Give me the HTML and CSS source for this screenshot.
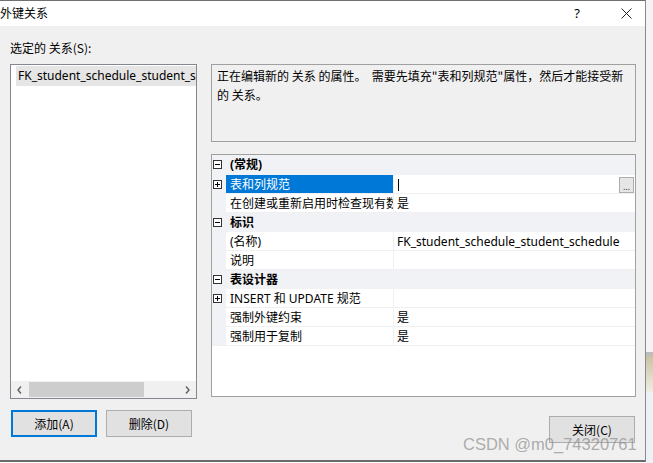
FILE: index.html
```html
<!DOCTYPE html>
<html>
<head>
<meta charset="utf-8">
<link rel="stylesheet" href="styles.css">
</head>
<body>
<div class="screen">
  <div class="dialog">
    <div class="titlebar">
      <span class="title">外键关系</span>
      <span class="help">?</span>
      <span class="closex"><svg width="11" height="11" viewBox="0 0 11 11"><path d="M0.5 0.5 L10.5 10.5 M10.5 0.5 L0.5 10.5" stroke="#222" stroke-width="1" fill="none"/></svg></span>
    </div>
    <div class="body">
      <div class="left">
        <div class="label">选定的 关系(S):</div>
        <div class="listbox">
          <div class="items">
            <div class="item sel">FK_student_schedule_student_schedule</div>
          </div>
          <div class="hscroll">
            <span class="arrow"><svg width="5" height="8" viewBox="0 0 5 8"><path d="M4 0.5 L1 4 L4 7.5" stroke="#606060" stroke-width="1.4" fill="none"/></svg></span>
            <div class="track"><div class="thumb"></div></div>
            <span class="arrow"><svg width="5" height="8" viewBox="0 0 5 8"><path d="M1 0.5 L4 4 L1 7.5" stroke="#606060" stroke-width="1.4" fill="none"/></svg></span>
          </div>
        </div>
        <div class="btnrow">
          <button class="btn default">添加(A)</button>
          <button class="btn">删除(D)</button>
        </div>
      </div>
      <div class="right">
        <div class="desc">正在编辑新的 关系 的属性。&nbsp; 需要先填充"表和列规范"属性，然后才能接受新<br>的 关系。</div>
        <div class="pgrid">
          <div class="row cat"><span class="gut"><span class="tog minus"></span></span><span class="name">(常规)</span></div>
          <div class="row"><span class="gut"><span class="tog plus"></span></span><span class="name sel">表和列规范</span><span class="val"><span class="caret"></span><span class="ellip">…</span></span></div>
          <div class="row"><span class="gut"></span><span class="name">在创建或重新启用时检查现有数据</span><span class="val">是</span></div>
          <div class="row cat"><span class="gut"><span class="tog minus"></span></span><span class="name">标识</span></div>
          <div class="row"><span class="gut"></span><span class="name">(名称)</span><span class="val">FK_student_schedule_student_schedule</span></div>
          <div class="row"><span class="gut"></span><span class="name">说明</span><span class="val"></span></div>
          <div class="row cat"><span class="gut"><span class="tog minus"></span></span><span class="name">表设计器</span></div>
          <div class="row"><span class="gut"><span class="tog plus"></span></span><span class="name">INSERT 和 UPDATE 规范</span><span class="val"></span></div>
          <div class="row"><span class="gut"></span><span class="name">强制外键约束</span><span class="val">是</span></div>
          <div class="row"><span class="gut"></span><span class="name">强制用于复制</span><span class="val">是</span></div>
        </div>
        <div class="closerow"><button class="btn">关闭(C)</button></div>
      </div>
    </div>
  </div>
  <div class="outside">
    <div class="o1"></div>
    <div class="o2"></div>
    <div class="o3"></div>
    <div class="o4"></div>
  </div>
  <div class="watermark">CSDN @m0_74320761</div>
</div>
</body>
</html>
```
FILE: styles.css
```css
html, body {
  margin: 0;
  padding: 0;
  background: #ffffff;
}
body {
  font-family: "Noto Sans", "Noto Sans CJK SC", sans-serif;
  font-size: 12px;
  color: #000;
}
.screen {
  position: relative;
  width: 653px;
  height: 463px;
  display: flex;
  overflow: hidden;
}
.dialog {
  width: 646px;
  height: 462px;
  box-sizing: border-box;
  border-top: 1px solid #707070;
  border-right: 1px solid #8a8a8a;
  border-bottom: 2px solid #6a6a6a;
  display: flex;
  flex-direction: column;
  background: #f0f0f0;
}
.titlebar {
  height: 25px;
  background: #fff;
  display: flex;
  align-items: center;
  flex: none;
}
.title {
  padding-left: 0;
  font-family: "Noto Sans CJK SC", sans-serif;
  font-size: 12px;
  flex: 1;
  margin-top: -3px;
}
.help {
  font-family: "Noto Sans", sans-serif;
  font-size: 13px;
  margin-right: 41px;
  margin-top: -1px;
}
.closex {
  display: flex;
  margin-right: 13px;
}
.body {
  flex: 1;
  display: flex;
  padding-left: 10px;
}
.left {
  width: 187px;
  display: flex;
  flex-direction: column;
  padding-top: 14px;
}
.label {
  height: 16px;
  line-height: 16px;
  font-family: "Noto Sans CJK SC", sans-serif;
  margin-bottom: 8px;
}
.listbox {
  height: 335px;
  box-sizing: border-box;
  border: 1px solid #828790;
  background: #fff;
  display: flex;
  flex-direction: column;
}
.items {
  flex: 1;
  padding: 1px 0 0 5px;
  overflow: hidden;
}
.item {
  height: 20px;
  line-height: 20px;
  padding-left: 2px;
  white-space: nowrap;
  overflow: hidden;
}
.item.sel {
  background: #e5e5e5;
}
.hscroll {
  height: 17px;
  display: flex;
  align-items: center;
  background: #f0f0f0;
}
.arrow {
  width: 17px;
  display: flex;
  justify-content: center;
  align-items: center;
}
.track {
  flex: 1;
  height: 100%;
  display: flex;
  align-items: center;
}
.thumb {
  width: 115px;
  height: 15px;
  background: #cdcdcd;
  margin-left: 1px;
}
.btnrow {
  display: flex;
  gap: 9px;
  margin-top: 11px;
  padding-left: 1px;
}
.btn {
  font-family: "Noto Sans CJK SC", sans-serif;
  font-size: 12px;
  background: #e1e1e1;
  border: 1px solid #adadad;
  height: 27px;
  width: 86px;
  padding: 0;
  color: #000;
  margin: 0;
}
.btn.default {
  border: 2px solid #0078d7;
}
.right {
  margin-left: 14px;
  width: 425px;
  display: flex;
  flex-direction: column;
  padding-top: 38px;
}
.desc {
  height: 78px;
  box-sizing: border-box;
  border: 1px solid #a0a0a0;
  padding: 1px 5px;
  line-height: 19px;
  font-family: "Noto Sans CJK SC", sans-serif;
  white-space: nowrap;
}
.pgrid {
  margin-top: 12px;
  height: 243px;
  box-sizing: border-box;
  border: 1px solid #a0a0a0;
  padding-top: 1px;
  background: #fff;
  display: flex;
  flex-direction: column;
}
.row {
  height: 19px;
  box-sizing: border-box;
  display: flex;
  border-bottom: 1px solid #f0f0f0;
  line-height: 18px;
}
.row.cat {
  background: #f0f2f6;
  font-weight: bold;
  border-bottom-color: #f0f2f6;
}
.row:first-child {
  margin-top: -1px;
  height: 20px;
}
.gut {
  width: 14px;
  flex: none;
  background: #f0f2f6;
  display: flex;
  align-items: center;
}
.tog {
  width: 9px;
  height: 9px;
  box-sizing: border-box;
  border: 1px solid #333;
  margin-left: 1px;
  position: relative;
  background: #fff;
}
.tog::before {
  content: "";
  position: absolute;
  left: 1px;
  right: 1px;
  top: 3px;
  height: 1px;
  background: #000;
}
.tog.plus::after {
  content: "";
  position: absolute;
  top: 1px;
  bottom: 1px;
  left: 3px;
  width: 1px;
  background: #000;
}
.name {
  width: 167px;
  flex: none;
  padding: 1px 0 0 4px;
  box-sizing: border-box;
  white-space: nowrap;
  overflow: hidden;
}
.row.cat .name {
  width: auto;
}
.name.sel {
  background: #0078d7;
  color: #fff;
}
.val {
  flex: 1;
  border-left: 1px solid #f0f0f0;
  padding: 1px 0 0 3px;
  display: flex;
  align-items: center;
  white-space: nowrap;
  overflow: hidden;
}
.caret {
  width: 1px;
  height: 12px;
  background: #000;
  margin-left: 1px;
}
.ellip {
  margin-left: auto;
  margin-right: 1px;
  width: 15px;
  height: 16px;
  box-sizing: border-box;
  border: 1px solid #adadad;
  background: #e6e6e6;
  font-size: 9px;
  line-height: 18px;
  text-align: center;
  color: #333;
}
.closerow {
  display: flex;
  justify-content: flex-end;
  margin-top: 19px;
}
.closerow .btn {
  width: 86px;
  margin-right: 1px;
}
.outside {
  flex: 1;
  display: flex;
  flex-direction: column;
}
.o1 { height: 352px; background: #f4f4f4; }
.o2 { height: 4px; background: #bdbdbd; }
.o3 { height: 36px; background: linear-gradient(#c9c3a2, #efeee4); }
.o4 { flex: 1; background: #eef2f7; }
.watermark {
  position: absolute;
  left: 463px;
  top: 435px;
  font-family: "Liberation Sans", sans-serif;
  font-size: 16.5px;
  color: rgba(140, 140, 140, 0.7);
  white-space: nowrap;
}
```
